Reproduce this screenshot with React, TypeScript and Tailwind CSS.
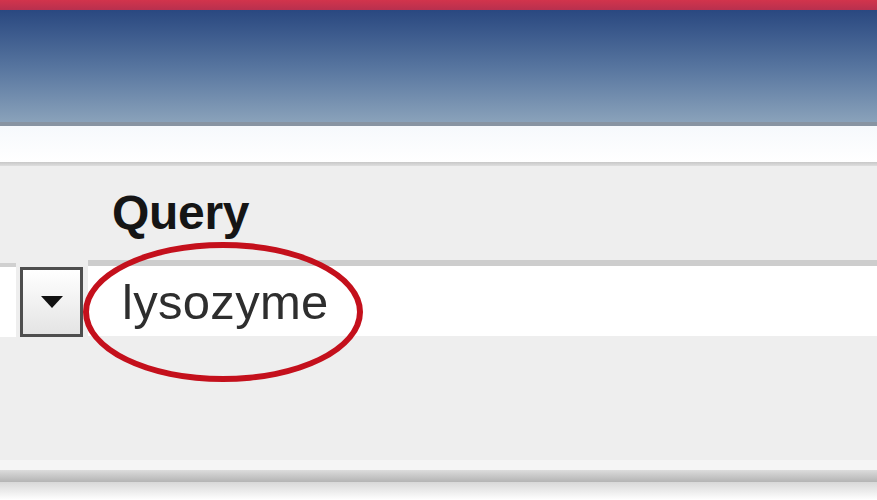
import React from 'react';

export default function App() {
  return (
    <div className="w-[877px] h-[500px] overflow-hidden bg-[#eeeeee] font-['Liberation_Sans',Arial,sans-serif]">
      {/* Header bars */}
      <div className="h-[10px] bg-gradient-to-b from-[#d2344c] to-[#b8304e]" />
      <div className="h-[112px] bg-gradient-to-b from-[#2a4880] via-[#56749e] to-[#8aa2ba]" />
      <div className="h-[4px] bg-[#8894a2]" />
      <div className="h-[36px] bg-gradient-to-b from-[#f6f9fc] to-white" />
      <div className="h-[4px] bg-gradient-to-b from-[#c8c8c8] to-[#dedede]" />

      {/* Search form */}
      <div className="relative h-[294px] bg-[#eeeeee] pt-[23px]">
        <div className="pl-[112px] text-[48px] leading-none font-bold text-[#151515] tracking-[-0.3px]">
          Query
        </div>

        <div className="mt-[23px] flex items-stretch h-[76px]">
          <div className="w-[16px] mt-[3px] mb-[-1px] bg-white border-t-[4px] border-[#d0d0d0]" />
          <div className="ml-[4px] mt-[7px] w-[63px] h-[70px] border-[3px] border-[#4e4e4e] bg-gradient-to-b from-white to-[#e4e4e4] flex items-center justify-center">
            <span className="block w-0 h-0 border-l-[11px] border-r-[11px] border-t-[12px] border-l-transparent border-r-transparent border-t-[#111]" />
          </div>
          <div className="ml-[5px] flex-1 bg-white border-t-[6px] border-[#cdcdcd] flex items-center pl-[34px]">
            <span className="text-[49px] leading-none tracking-[0.3px] text-[#2e2e2e] mt-[2px]">lysozyme</span>
          </div>
        </div>

        {/* highlight ring */}
        <div className="absolute left-[83px] top-[76px] w-[280px] h-[140px] rounded-[50%] border-[6px] border-[#c4101c]" />
      </div>

      {/* Bottom edge */}
      <div className="h-[10px] bg-[#f5f5f5]" />
      <div className="h-[12px] bg-gradient-to-b from-[#dcdcdc] to-[#b4b4b4]" />
      <div className="h-[18px] bg-gradient-to-b from-[#d8d8d8] to-white" />
    </div>
  );
}
